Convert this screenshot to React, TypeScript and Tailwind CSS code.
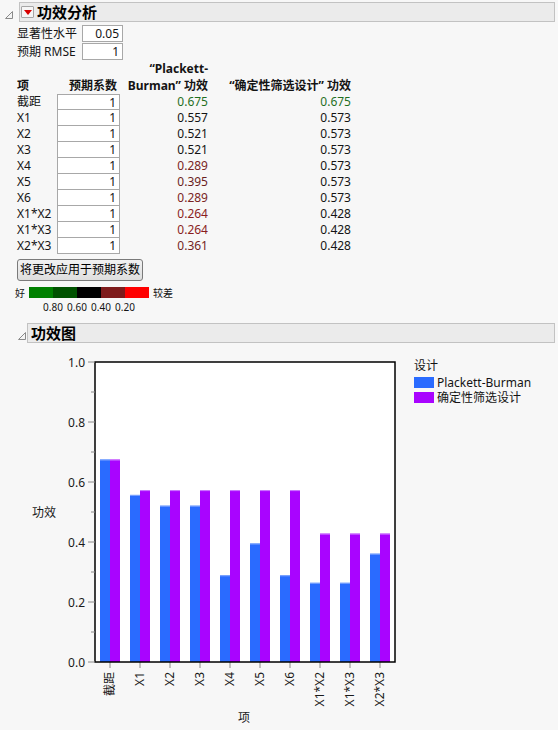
import React from 'react';

const FONT = '"Noto Sans", "Noto Sans CJK SC", sans-serif';

type Row = { term: string; pb: string; pbColor: string; dsd: string; dsdColor: string };

const rows: Row[] = [
  { term: '截距', pb: '0.675', pbColor: '#1f6f1f', dsd: '0.675', dsdColor: '#1f6f1f' },
  { term: 'X1', pb: '0.557', pbColor: '#141414', dsd: '0.573', dsdColor: '#141414' },
  { term: 'X2', pb: '0.521', pbColor: '#141414', dsd: '0.573', dsdColor: '#141414' },
  { term: 'X3', pb: '0.521', pbColor: '#141414', dsd: '0.573', dsdColor: '#141414' },
  { term: 'X4', pb: '0.289', pbColor: '#7a2424', dsd: '0.573', dsdColor: '#141414' },
  { term: 'X5', pb: '0.395', pbColor: '#6a1e1e', dsd: '0.573', dsdColor: '#141414' },
  { term: 'X6', pb: '0.289', pbColor: '#7a2424', dsd: '0.573', dsdColor: '#141414' },
  { term: 'X1*X2', pb: '0.264', pbColor: '#8a1e1e', dsd: '0.428', dsdColor: '#141414' },
  { term: 'X1*X3', pb: '0.264', pbColor: '#8a1e1e', dsd: '0.428', dsdColor: '#141414' },
  { term: 'X2*X3', pb: '0.361', pbColor: '#741f1f', dsd: '0.428', dsdColor: '#141414' },
];

const Disclosure = () => (
  <svg width="8" height="8" viewBox="0 0 8 8" className="shrink-0">
    <path d="M7.5 0.5 L7.5 7.5 L0.5 7.5 Z" fill="#f4f4f4" stroke="#8a8a8a" strokeWidth="1" />
  </svg>
);

const Chart = () => {
  const left = 95;
  const right = 395;
  const top = 362;
  const bottom = 662;
  const y = (v: number) => bottom - v * 300;
  const majors = [1.0, 0.8, 0.6, 0.4, 0.2, 0.0];
  const minors = [0.9, 0.7, 0.5, 0.3, 0.1];
  return (
    <svg width="410" height="386" viewBox="0 343 410 386" fontFamily={FONT} className="shrink-0">
      <rect x={left} y={top} width={right - left} height={bottom - top} fill="#ffffff" />
      {rows.map((r, i) => {
        const bx = left + 5 + i * 30;
        const pb = parseFloat(r.pb);
        const dsd = parseFloat(r.dsd);
        return (
          <g key={r.term}>
            <rect x={bx} y={y(pb)} width={10} height={bottom - y(pb)} fill="#2a6bff" />
            <rect x={bx} y={y(pb)} width={10} height={1} fill="#7fa6ff" />
            <rect x={bx + 10} y={y(dsd)} width={10} height={bottom - y(dsd)} fill="#a904ff" />
            <rect x={bx + 10} y={y(dsd)} width={10} height={1} fill="#cf7dff" />
            <line x1={bx + 10} y1={bottom} x2={bx + 10} y2={bottom + 6} stroke="#8a8a8a" strokeWidth="1" />
            <text
              transform={`translate(${bx + 14} ${bottom + 10}) rotate(-90)`}
              textAnchor="end"
              fontSize="12"
              fill="#1a1a1a"
            >
              {r.term}
            </text>
          </g>
        );
      })}
      <rect x={left} y={top} width={right - left} height={bottom - top} fill="none" stroke="#000" strokeWidth="1.5" />
      {majors.map((v) => (
        <g key={v}>
          <line x1={88} y1={y(v)} x2={left} y2={y(v)} stroke="#8a8a8a" strokeWidth="1" />
          <text x={85} y={y(v) + 4.5} textAnchor="end" fontSize="12" fill="#1a1a1a">
            {v.toFixed(1)}
          </text>
        </g>
      ))}
      {minors.map((v) => (
        <line key={v} x1={91} y1={y(v)} x2={left} y2={y(v)} stroke="#8a8a8a" strokeWidth="1" />
      ))}
      <text x={32} y={517} fontSize="12" fill="#1a1a1a">功效</text>
      <text x={244} y={722} fontSize="12" fill="#1a1a1a" textAnchor="middle">项</text>
    </svg>
  );
};

export default function App() {
  return (
    <div className="w-[558px] h-[730px] overflow-hidden bg-[#f7f7f7] text-[12px] text-[#141414]" style={{ fontFamily: FONT }}>
      {/* 功效分析 header */}
      <div className="flex items-center pt-[2px] pl-[5px] pr-[3px]">
        <div className="w-[14px] flex justify-start pt-[5px]">
          <Disclosure />
        </div>
        <div className="flex-1 h-[20px] flex items-center gap-[3px] border border-[#c2c2c2] bg-[#ebebeb] pl-[1px]">
          <div className="w-[13px] h-[12px] flex items-center justify-center border border-[#a6a6a6] bg-[#f6f6f6] rounded-[1px]">
            <svg width="8" height="5" viewBox="0 0 8 5">
              <path d="M0 0 L8 0 L4 5 Z" fill="#d80000" />
            </svg>
          </div>
          <span className="text-[15px] font-bold leading-none text-black">功效分析</span>
        </div>
      </div>

      <div className="pl-[17px]">
        {/* parameters */}
        <div className="flex flex-col gap-[1px] mt-[3px]">
          <div className="flex items-center h-[17px]">
            <span className="w-[65px]">显著性水平</span>
            <div className="w-[41px] h-[17px] border border-[#a8a8a8] bg-white text-right pr-[3px] leading-[15px]">0.05</div>
          </div>
          <div className="flex items-center h-[17px]">
            <span className="w-[65px]">预期 RMSE</span>
            <div className="w-[41px] h-[17px] border border-[#a8a8a8] bg-white text-right pr-[3px] leading-[15px]">1</div>
          </div>
        </div>

        {/* table */}
        <div className="grid grid-cols-[40px_63px_88px_143px] mt-[1px]">
          <div className="flex items-end font-bold leading-[17px] h-[33px]">项</div>
          <div className="flex items-end justify-end pr-[3px] font-bold leading-[17px] h-[33px]">预期系数</div>
          <div className="flex flex-col items-end justify-end font-bold leading-[17px] h-[33px]">
            <span>“Plackett-</span>
            <span>Burman” 功效</span>
          </div>
          <div className="flex items-end justify-end font-bold leading-[17px] h-[33px]">“确定性筛选设计” 功效</div>
          {rows.map((r, i) => (
            <React.Fragment key={r.term}>
              <div className="h-[16px] leading-[16px]">{r.term}</div>
              <div
                className={`h-[16px] leading-[15px] overflow-hidden bg-white border-x border-b border-[#a8a8a8] text-right pr-[3px] ${i === 0 ? 'border-t' : ''}`}
              >
                1
              </div>
              <div className="h-[16px] leading-[16px] text-right" style={{ color: r.pbColor }}>
                {r.pb}
              </div>
              <div className="h-[16px] leading-[16px] text-right" style={{ color: r.dsdColor }}>
                {r.dsd}
              </div>
            </React.Fragment>
          ))}
        </div>

        {/* button */}
        <button className="mt-[5px] w-[126px] h-[22px] rounded-[3px] border border-[#7a7a7a] bg-gradient-to-b from-[#f2f2f2] to-[#dedede] text-[12px] text-black leading-none">
          将更改应用于预期系数
        </button>

        {/* colour legend */}
        <div className="flex items-center mt-[6px] -ml-[2px] h-[11px]">
          <span className="w-[14px] text-[10px] leading-none">好</span>
          <div className="flex h-[11px]">
            <div className="w-[24px] bg-[#008000]" />
            <div className="w-[24px] bg-[#005200]" />
            <div className="w-[24px] bg-black" />
            <div className="w-[24px] bg-[#7e1b1b]" />
            <div className="w-[24px] bg-[#ff0000]" />
          </div>
          <span className="ml-[4px] text-[10px] leading-none">较差</span>
        </div>
        <div className="flex ml-[24px] mt-[4px] text-[10px] leading-none">
          <span className="w-[24px] text-center">0.80</span>
          <span className="w-[24px] text-center">0.60</span>
          <span className="w-[24px] text-center">0.40</span>
          <span className="w-[24px] text-center">0.20</span>
        </div>
      </div>

      {/* 功效图 header */}
      <div className="flex items-center mt-[11px] pl-[18px] pr-[3px]">
        <div className="w-[9px] flex pt-[5px]">
          <Disclosure />
        </div>
        <div className="flex-1 h-[20px] flex items-center border border-[#c2c2c2] bg-[#ebebeb] pl-[3px]">
          <span className="text-[15px] font-bold leading-none text-black">功效图</span>
        </div>
      </div>

      {/* chart + legend */}
      <div className="flex">
        <Chart />
        <div className="ml-[4px] pt-[15px] flex flex-col">
          <span className="leading-[16px]">设计</span>
          <div className="flex items-center gap-[3px] mt-[1px] h-[15px]">
            <div className="w-[20px] h-[11px] bg-[#2a6bff]" />
            <span className="leading-[15px]">Plackett-Burman</span>
          </div>
          <div className="flex items-center gap-[3px] h-[15px]">
            <div className="w-[20px] h-[11px] bg-[#a904ff]" />
            <span className="leading-[15px]">确定性筛选设计</span>
          </div>
        </div>
      </div>
    </div>
  );
}
